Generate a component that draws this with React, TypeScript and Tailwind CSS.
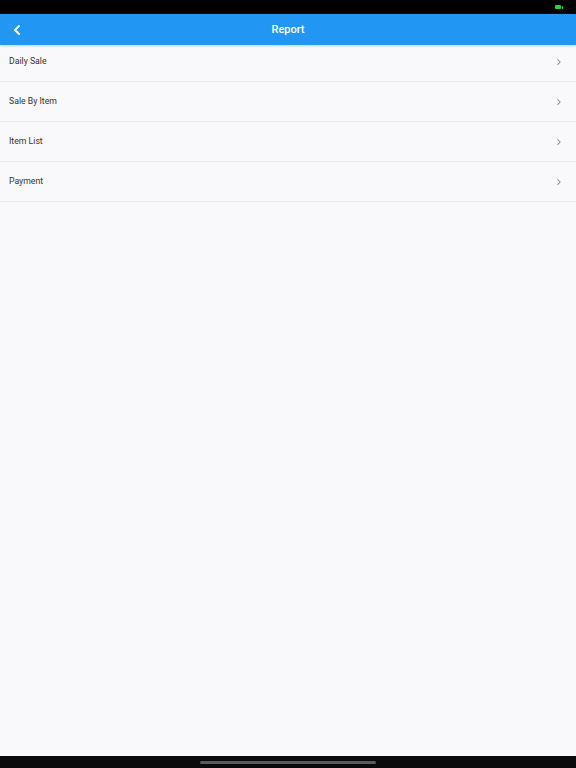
import { ChevronLeft, ChevronRight } from "lucide-react";

const items = ["Daily Sale", "Sale By Item", "Item List", "Payment"];

export default function App() {
  return (
    <div
      className="w-[576px] h-[768px] flex flex-col bg-[#f9f9fb] overflow-hidden"
      style={{ fontFamily: "Roboto, 'Liberation Sans', sans-serif" }}
    >
      {/* Status bar */}
      <div className="h-[14px] bg-black flex items-center justify-end pr-[13px]">
        <div className="flex items-center gap-[1px]">
          <div className="w-[6px] h-[4px] bg-[#2ecc40] rounded-[1px]" />
          <div className="w-[1px] h-[3px] bg-[#2ecc40]" />
        </div>
      </div>

      {/* Header */}
      <div className="h-[31px] bg-[#2196f3] flex items-center relative shadow-[0_1px_2px_rgba(33,150,243,0.35)] z-10">
        <button className="absolute left-[9px] top-1/2 -translate-y-1/2 text-white">
          <ChevronLeft className="w-[16px] h-[16px]" strokeWidth={3} />
        </button>
        <h1 className="flex-1 text-center text-white text-[11px] font-medium pt-[2px]">Report</h1>
      </div>

      {/* List */}
      <div className="flex flex-col">
        {items.map((label, i) => (
          <div
            key={label}
            className={`flex items-center justify-between pl-[9px] pr-[12px] border-b border-[#ececee] ${
              i === 0 ? "h-[37px] pb-[3px]" : "h-[40px]"
            }`}
          >
            <span className="text-[8.7px] text-[#333333]">{label}</span>
            <ChevronRight className="w-[10px] h-[10px] text-[#8e8e93]" strokeWidth={2.5} />
          </div>
        ))}
      </div>

      <div className="flex-1" />

      {/* Home indicator */}
      <div className="h-[12px] bg-[#0a0a0c] flex items-center justify-center">
        <div className="w-[176px] h-[3px] rounded-full bg-[#5a5a5c]" />
      </div>
    </div>
  );
}
